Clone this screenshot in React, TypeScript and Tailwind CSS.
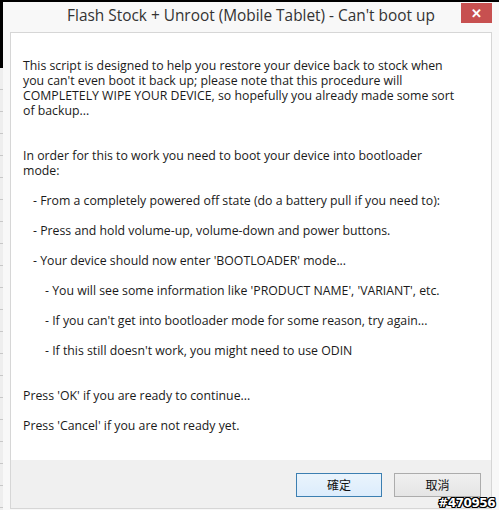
import React from "react";

const sideRows = [70, 92, 112, 134, 156, 178, 200, 222, 244, 266, 288, 310, 332, 354, 376, 398, 420, 442, 464, 486];

const Line = ({ children, indent = "" }: { children: React.ReactNode; indent?: string }) => (
  <div className={`h-[15px] leading-[15px] whitespace-nowrap ${indent}`}>{children}</div>
);

export default function App() {
  return (
    <div className="w-[499px] h-[510px] bg-black flex overflow-hidden font-['Open_Sans','Noto_Sans',sans-serif]">
      {/* window behind the dialog, only a sliver shows */}
      <div className="w-[3px] flex flex-col shrink-0">
        <div className="h-[68px] bg-black" />
        <div className="flex-1 bg-[#eeeeee] flex flex-col">
          {sideRows.map((r, i) => (
            <div key={i} className="h-[22px] border-b border-[#c8c8c8]" />
          ))}
        </div>
      </div>

      {/* dialog */}
      <div className="flex-1 mt-[2px] bg-[#f8f8f8] flex flex-col relative">
        <div className="h-[30px] flex items-start">
          <div className="w-[38px] shrink-0" />
          <div className="flex-1 text-center text-[15.4px] leading-[30px] text-[#333] -mt-[1px]">
            Flash Stock + Unroot (Mobile Tablet) - Can't boot up
          </div>
          <div className="w-[31px] h-[20px] mt-[1px] mr-[7px] bg-[#c75050] flex items-center justify-center text-white text-[13px] font-bold leading-none">
            ✕
          </div>
        </div>

        <div className="ml-[7px] w-[482px] flex-1 border border-[#d6d6d6] flex flex-col">
          <div className="flex-1 bg-white pl-[12px] pt-[25px] text-[12.3px] text-[#1a1a1a]">
            <Line>This script is designed to help you restore your device back to stock when</Line>
            <Line>you can't even boot it back up; please note that this procedure will</Line>
            <Line>COMPLETELY WIPE YOUR DEVICE, so hopefully you already made some sort</Line>
            <Line>of backup...</Line>

            <div className="mt-[30px]">
              <Line>In order for this to work you need to boot your device into bootloader</Line>
              <Line>mode:</Line>
            </div>

            <div className="mt-[15px] flex flex-col gap-[15px]">
              <Line indent="pl-[10px]">- From a completely powered off state (do a battery pull if you need to):</Line>
              <Line indent="pl-[10px]">- Press and hold volume-up, volume-down and power buttons.</Line>
              <Line indent="pl-[10px]">- Your device should now enter 'BOOTLOADER' mode...</Line>
              <Line indent="pl-[22px]">- You will see some information like 'PRODUCT NAME', 'VARIANT', etc.</Line>
              <Line indent="pl-[22px]">- If you can't get into bootloader mode for some reason, try again...</Line>
              <Line indent="pl-[22px]">- If this still doesn't work, you might need to use ODIN</Line>
            </div>

            <div className="mt-[30px] flex flex-col gap-[15px]">
              <Line>Press 'OK' if you are ready to continue...</Line>
              <Line>Press 'Cancel' if you are not ready yet.</Line>
            </div>
          </div>

          <div className="h-[48px] bg-[#f0f0f0] flex items-start justify-end gap-[12px] pt-[13px] pr-[10px]">
            <button className="w-[86px] h-[24px] border border-[#3c7fb1] bg-gradient-to-b from-[#eaf4fc] to-[#dcecfc] text-[12px] text-[#111] font-['Noto_Sans_CJK_TC',sans-serif]">
              確定
            </button>
            <button className="w-[87px] h-[24px] border border-[#acacac] bg-gradient-to-b from-[#f0f0f0] to-[#e5e5e5] text-[12px] text-[#111] font-['Noto_Sans_CJK_TC',sans-serif]">
              取消
            </button>
          </div>
        </div>
        <div className="h-[1px]" />

        {/* forum watermark */}
        <div className="absolute right-[4px] bottom-[1px] text-[12px] font-bold text-white leading-none font-['DejaVu_Sans',sans-serif] tracking-[-0.5px] [text-shadow:1px_0_0_#000,-1px_0_0_#000,0_1px_0_#000,0_-1px_0_#000,1px_1px_0_#000,-1px_-1px_0_#000,1px_-1px_0_#000,-1px_1px_0_#000]">
          #470956
        </div>
      </div>
    </div>
  );
}
